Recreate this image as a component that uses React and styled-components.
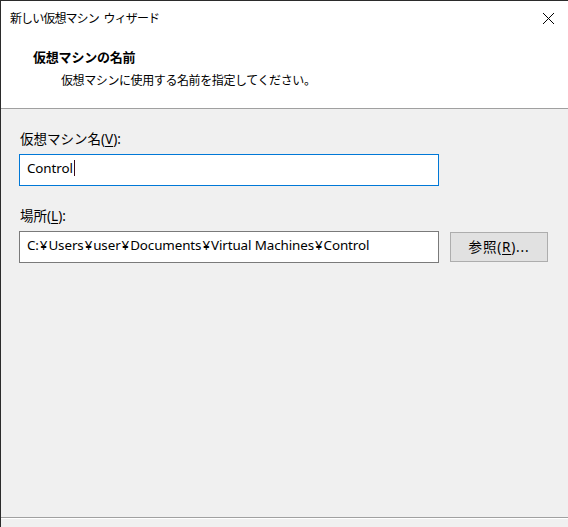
import React from "react";
import styled, { createGlobalStyle } from "styled-components";

const Global = createGlobalStyle`
  html, body { margin: 0; padding: 0; background: #f0f0f0; }
  body { font-family: "Noto Sans CJK JP", "Noto Sans", sans-serif; font-size: 12px; color: #000; }
  #root { height: 527px; }
`;

const Window = styled.div`
  box-sizing: border-box;
  width: 568px;
  height: 527px;
  display: flex;
  flex-direction: column;
  border-left: 1px solid #2b2b2b;
  border-top: 1px solid #2b2b2b;
  background: #f0f0f0;
  overflow: hidden;
`;

const TitleBar = styled.div`
  height: 31px;
  flex: none;
  display: flex;
  align-items: center;
  justify-content: space-between;
  background: #fff;
  padding: 0 13px 0 9px;
`;

const TitleText = styled.span`
  font-size: 12px;
  line-height: 16px;
  letter-spacing: -0.9px;
  word-spacing: 3px;
  margin-top: 3px;
`;

const CloseButton = styled.span`
  display: flex;
  width: 13px;
  height: 13px;
  margin-top: 3px;
`;

const Header = styled.div`
  flex: none;
  height: 77px;
  background: #fff;
  border-bottom: 1px solid #a0a0a0;
  box-sizing: border-box;
  padding: 17px 0 0 32px;
  display: flex;
  flex-direction: column;
`;

const HeaderTitle = styled.div`
  font-weight: bold;
  font-size: 13px;
  line-height: 16px;
  letter-spacing: -0.2px;
`;

const HeaderSub = styled.div`
  font-size: 12px;
  line-height: 16px;
  letter-spacing: -0.4px;
  margin: 7px 0 0 28px;
`;

const Body = styled.div`
  flex: 1;
  display: flex;
  flex-direction: column;
  padding: 22px 0 0 18px;
`;

const Label = styled.label`
  font-family: "Noto Sans", "Noto Sans CJK JP", sans-serif;
  font-size: 13.5px;
  line-height: 16px;
  margin: 0 0 7px 1px;
  & u { text-decoration: underline; text-underline-offset: 2px; }
`;

const Row = styled.div`
  display: flex;
  align-items: center;
  gap: 11px;
  margin-bottom: ${(p) => p.$mb || 0}px;
`;

const TextBox = styled.div`
  box-sizing: border-box;
  width: 420px;
  height: 32px;
  background: #fff;
  border: 1px solid ${(p) => (p.$focused ? "#0078d7" : "#7a7a7a")};
  display: flex;
  align-items: center;
  padding: 0 0 4px 7px;
  font-family: "Noto Sans", "Noto Sans CJK JP", sans-serif;
  font-size: 13.4px;
  letter-spacing: -0.1px;
  white-space: pre;
`;

const Yen = styled.span`
  padding: 0 1px;
`;

const Caret = styled.span`
  display: inline-block;
  width: 1px;
  height: 16px;
  background: #3b0a1a;
  margin-left: 1px;
`;

const Button = styled.button`
  box-sizing: border-box;
  width: 98px;
  height: 30px;
  background: #e1e1e1;
  border: 1px solid #adadad;
  font-family: "Noto Sans", "Noto Sans CJK JP", sans-serif;
  font-size: 13.5px;
  letter-spacing: 0.8px;
  color: #000;
  padding: 0 0 2px;
  & u { text-decoration: underline; text-underline-offset: 2px; }
`;

const Footer = styled.div`
  flex: none;
  height: 9px;
  border-top: 1px solid #a0a0a0;
  box-shadow: inset 0 1px 0 #fff;
`;

const path = ["C:", "Users", "user", "Documents", "Virtual Machines", "Control"];

export default function App() {
  return (
    <>
      <Global />
      <Window>
        <TitleBar>
          <TitleText>新しい仮想マシン ウィザード</TitleText>
          <CloseButton>
            <svg width="13" height="13" viewBox="0 0 13 13">
              <path d="M1 1 L12 12 M12 1 L1 12" stroke="#000" strokeWidth="1" fill="none" />
            </svg>
          </CloseButton>
        </TitleBar>
        <Header>
          <HeaderTitle>仮想マシンの名前</HeaderTitle>
          <HeaderSub>仮想マシンに使用する名前を指定してください。</HeaderSub>
        </Header>
        <Body>
          <Label>
            仮想マシン名(<u>V</u>):
          </Label>
          <Row $mb={22}>
            <TextBox $focused>
              Control
              <Caret />
            </TextBox>
          </Row>
          <Label>
            場所(<u>L</u>):
          </Label>
          <Row>
            <TextBox>
              {path.map((seg, i) => (
                <React.Fragment key={i}>
                  {i > 0 && <Yen>¥</Yen>}
                  {seg}
                </React.Fragment>
              ))}
            </TextBox>
            <Button>
              参照(<u>R</u>)...
            </Button>
          </Row>
        </Body>
        <Footer />
      </Window>
    </>
  );
}
